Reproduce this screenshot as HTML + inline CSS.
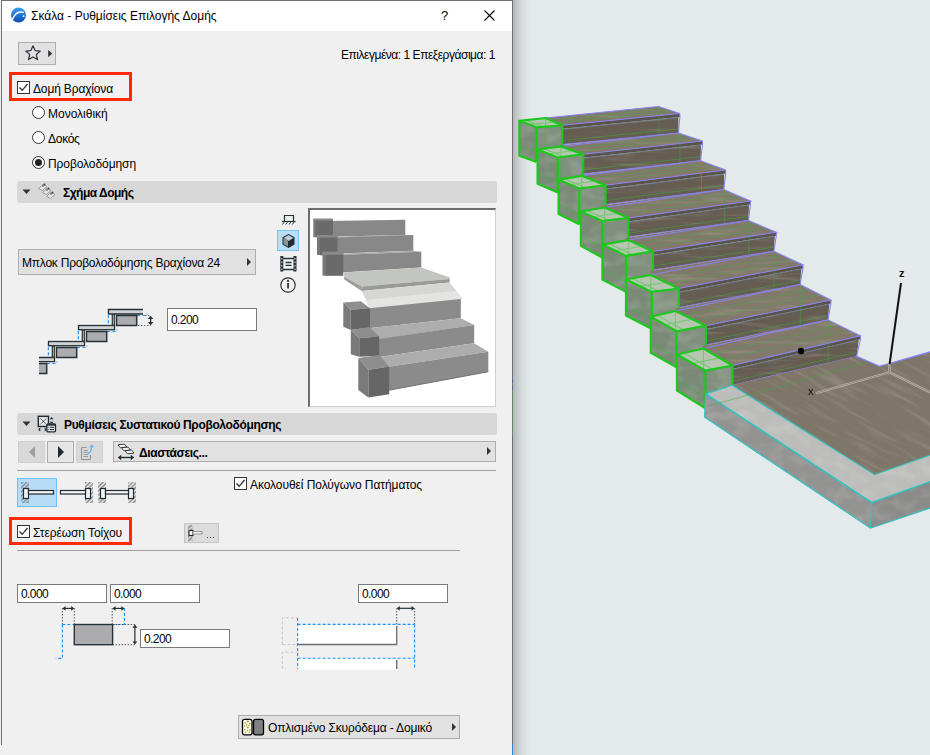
<!DOCTYPE html>
<html><head><meta charset="utf-8">
<style>
*{box-sizing:border-box;margin:0;padding:0}
html,body{width:930px;height:755px;overflow:hidden;background:#e4e9ec;font-family:"Liberation Sans",sans-serif;font-size:12px;color:#000}
.a{position:absolute}
.t{position:absolute;white-space:nowrap;line-height:14px;margin-top:1px}
#dlg{position:absolute;left:0;top:0;width:513px;height:755px;background:#f0f0f0;overflow:hidden}
.cb{position:absolute;width:13px;height:13px;border:1px solid #333;background:#fff}
.rd{position:absolute;width:13px;height:13px;border:1px solid #333;border-radius:50%;background:#fff}
.hdr{position:absolute;left:17px;width:480px;height:22px;background:#d7d7d7;border-radius:3px}
.inp{position:absolute;background:#fff;border:1px solid #7a7a7a;height:19px}
.inp span{position:absolute;left:3px;top:2px;letter-spacing:-0.6px;color:#000;line-height:14px}
.red{position:absolute;border:3px solid #ff2a00}
</style></head><body>
<div id="dlg">
  <!-- borders -->
  <div class="a" style="left:1px;top:0;width:512px;height:1px;background:#6f6f6f"></div>
  <div class="a" style="left:1px;top:0;width:1px;height:745px;background:#6f6f6f"></div>
  <div class="a" style="left:512px;top:0;width:1px;height:745px;background:#6f6f6f"></div>
  <div class="a" style="left:512px;top:745px;width:1px;height:10px;background:#2b8ad8"></div>
  <div class="a" style="left:512px;top:380px;width:1px;height:2px;background:#3a5fb0"></div>
  <div class="a" style="left:512px;top:387px;width:1px;height:3px;background:#4a6aa8"></div>
  <div class="a" style="left:512px;top:390px;width:1px;height:45px;background:#5e8a68"></div>
  <!-- title bar -->
  <div class="a" style="left:2px;top:1px;width:510px;height:30px;background:#fff"></div>
  <svg class="a" style="left:10px;top:7px" width="17" height="17" viewBox="0 0 17 17">
    <defs><linearGradient id="lg1" x1="0" y1="0" x2="0" y2="1"><stop offset="0" stop-color="#3aa0f0"/><stop offset="1" stop-color="#0b4fb0"/></linearGradient></defs>
    <circle cx="8.5" cy="8" r="7.5" fill="url(#lg1)"/>
    <path d="M2.5 12.5 Q6 3 14 5.5" stroke="#fff" stroke-width="1.4" fill="none"/>
    <circle cx="13.6" cy="9.2" r="0.9" fill="#fff"/>
  </svg>
  <div class="t" style="left:31px;top:8px">Σκάλα - Ρυθμίσεις Επιλογής Δομής</div>
  <div class="t" style="left:441px;top:8px;font-size:13px">?</div>
  <svg class="a" style="left:484px;top:10px" width="11" height="11" viewBox="0 0 11 11"><path d="M0.5 0.5L10.5 10.5M10.5 0.5L0.5 10.5" stroke="#000" stroke-width="1.1"/></svg>

  <!-- favorites button -->
  <div class="a" style="left:18px;top:42px;width:38px;height:23px;background:#e1e1e1;border:1px solid #adadad"></div>
  <svg class="a" style="left:24px;top:44px" width="30" height="19" viewBox="0 0 30 19">
    <path d="M9 1.8L11.1 6.6L16.2 7.1L12.3 10.5L13.5 15.6L9 12.9L4.5 15.6L5.7 10.5L1.8 7.1L6.9 6.6Z" fill="none" stroke="#2a3540" stroke-width="1.2" stroke-linejoin="round"/>
    <path d="M24.2 6L28.2 9.6L24.2 13.2Z" fill="#333"/>
  </svg>
  <div class="t" style="left:341px;top:47px;letter-spacing:-0.47px">Επιλεγμένα: 1 Επεξεργάσιμα: 1</div>

  <!-- red box 1 -->
  <div class="red" style="left:9px;top:72px;width:123px;height:29px"></div>
  <div class="cb" style="left:17px;top:81px"></div>
  <svg class="a" style="left:17px;top:81px" width="13" height="13" viewBox="0 0 13 13"><path d="M2.5 6.5L5.2 9.3L10.5 3" stroke="#333" stroke-width="1.3" fill="none"/></svg>
  <div class="t" style="left:33px;top:81px;letter-spacing:-0.15px">Δομή Βραχίονα</div>

  <div class="rd" style="left:32px;top:106px"></div>
  <div class="t" style="left:48px;top:106px">Μονολιθική</div>
  <div class="rd" style="left:32px;top:131px"></div>
  <div class="t" style="left:48px;top:131px;letter-spacing:-0.28px">Δοκός</div>
  <div class="rd" style="left:32px;top:156px"></div>
  <div class="a" style="left:35px;top:159px;width:7px;height:7px;border-radius:50%;background:#222"></div>
  <div class="t" style="left:48px;top:156px;letter-spacing:-0.08px">Προβολοδόμηση</div>

  <!-- section 1 header -->
  <div class="hdr" style="top:181px"></div>
  <svg class="a" style="left:22px;top:188px" width="9" height="8" viewBox="0 0 9 8"><path d="M0.5 1.5H8.5L4.5 6Z" fill="#333"/></svg>
  <svg class="a" style="left:37px;top:182px" width="19" height="20" viewBox="0 0 19 20">
    <g fill="#e6e6e6" stroke="#9a9a9a" stroke-width="1">
      <path d="M1.5 6.5L6 2.5L10 4.5L5.5 8.5Z"/><path d="M5.5 10.5L10 6.5L14 8.5L9.5 12.5Z"/><path d="M9.5 14.5L14 10.5L18 12.5L13.5 16.5Z"/>
    </g>
    <g fill="#3a3f42"><circle cx="7.5" cy="2.5" r="1"/><circle cx="6" cy="4" r="0.8"/><circle cx="11.5" cy="6.5" r="1"/><circle cx="10" cy="8" r="0.8"/><circle cx="15.5" cy="10.5" r="1"/><circle cx="14" cy="12" r="0.8"/></g>
  </svg>
  <div class="t" style="left:63px;top:185px;font-weight:bold;letter-spacing:-0.5px">Σχήμα Δομής</div>

  <!-- dropdown -->
  <div class="a" style="left:18px;top:249px;width:238px;height:26px;background:#e1e1e1;border:1px solid #adadad"></div>
  <div class="t" style="left:22px;top:255px;letter-spacing:-0.23px">Μπλοκ Προβολοδόμησης Βραχίονα 24</div>
  <svg class="a" style="left:246px;top:257px" width="6" height="10" viewBox="0 0 6 10"><path d="M1 1L5 5L1 9Z" fill="#333"/></svg>

  <!-- stair diagram -->
  <svg id="stairdiag" class="a" style="left:30px;top:300px" width="130" height="80" viewBox="0 0 130 80">
    <defs>
      <g id="stp">
        <path d="M78.4 15.2V25" stroke="#1e90ff" stroke-width="1.2" stroke-dasharray="3 2" fill="none"/>
        <path d="M107 15.5H116.8V13.5" stroke="#1e90ff" stroke-width="1.2" stroke-dasharray="3 2.5" fill="none"/>
        <rect x="82.3" y="13.8" width="2" height="11.6" fill="#d2d2d2" stroke="#263238" stroke-width="1.2"/>
        <rect x="86.5" y="15.5" width="20.2" height="10" fill="#acabb0" stroke="#263238" stroke-width="1.5"/>
      </g>
    </defs>
    <use href="#stp"/>
    <use href="#stp" transform="translate(-30,16)"/>
    <use href="#stp" transform="translate(-60,32)"/>
    <use href="#stp" transform="translate(-90,48)"/>
    <path d="M78.5 9.5H113M78.5 13.8H113M78.5 9.5V13.8" stroke="#263238" stroke-width="1.2" fill="#d2d2d2"/>
    <rect x="78.5" y="9.5" width="34" height="4.3" fill="#d2d2d2"/>
    <path d="M113 9.5H78.5V13.8H113" stroke="#263238" stroke-width="1.3" fill="none"/>
    <rect x="48.5" y="25.5" width="36" height="4.2" fill="#d2d2d2" stroke="#263238" stroke-width="1.3"/>
    <rect x="18.5" y="41.5" width="36" height="4.2" fill="#d2d2d2" stroke="#263238" stroke-width="1.3"/>
    <rect x="9" y="57.5" width="15.5" height="4.2" fill="#d2d2d2"/>
    <path d="M9 57.5H24.5V61.7H9" stroke="#263238" stroke-width="1.3" fill="none"/>
    <rect x="0" y="0" width="9" height="80" fill="#f0f0f0"/>
    <path d="M115 15.5H121M108 25.5H121" stroke="#555" stroke-width="0.9" stroke-dasharray="1.5 1.5"/>
    <path d="M120.6 17V24" stroke="#263238" stroke-width="1.3"/>
    <path d="M117.8 19L120.6 15.7L123.4 19ZM117.8 22L120.6 25.3L123.4 22Z" fill="#263238"/>
  </svg>

  <div class="inp" style="left:167px;top:308px;width:90px;height:23px"><span style="top:4px">0.200</span></div>

  <!-- view icons -->
  <svg class="a" style="left:276px;top:210px" width="24" height="84" viewBox="0 0 24 84">
    <path d="M8.5 11.5V5.5H17.5V11.5" stroke="#263238" stroke-width="1.2" fill="none"/>
    <path d="M6 11.5H19.5" stroke="#263238" stroke-width="1.2"/>
    <path d="M6.5 14.5L8 12.2M9.8 14.5L11.3 12.2M13.1 14.5L14.6 12.2M16.4 14.5L17.9 12.2" stroke="#263238" stroke-width="1"/>
    <rect x="1.5" y="20.5" width="21" height="20" fill="#b9def6" stroke="#76c5f5"/>
    <path d="M12.5 24L18.5 27.3V34.5L12.5 38L6.5 34.5V27.3Z" fill="#1f2c33"/>
    <path d="M7.5 28L12.5 25L17.5 28L12.5 31Z" fill="#b8cdd8"/>
    <path d="M7.5 28.3L12 31V36.6L7.5 34Z" fill="#8a979e"/>
    <rect x="4.3" y="46" width="3" height="15.5" fill="#263238"/>
    <rect x="17.5" y="46" width="3" height="15.5" fill="#263238"/>
    <path d="M5.8 48V49.5M5.8 51.5V53M5.8 55V56.5M5.8 58.5V60M19 48V49.5M19 51.5V53M19 55V56.5M19 58.5V60" stroke="#e8e8e8" stroke-width="1"/>
    <path d="M7 48.5H18M7 59.5H18M9.5 52.5H15.5M9.5 55.3H15.5" stroke="#263238" stroke-width="1.3"/>
    <circle cx="12" cy="75" r="7.2" fill="none" stroke="#263238" stroke-width="1.2"/>
    <rect x="11.2" y="73" width="1.7" height="5.5" fill="#263238"/>
    <circle cx="12" cy="70.8" r="1.1" fill="#263238"/>
  </svg>
  <!-- preview -->
  <div class="a" style="left:308px;top:208px;width:188px;height:199px;background:#fff;border:1px solid #cfcfcf;border-top:2px solid #6d6d6d;border-left:2px solid #6d6d6d"></div>
  <svg id="preview" class="a" style="left:310px;top:210px" width="185" height="196" viewBox="310 210 185 196">
    <!-- upper flight -->
    <polygon points="328,220.9 405.3,219.7 405.3,235 328,236.8" fill="#888"/>
    <polygon points="333,236.7 405.3,235 413.3,235.5 337.5,237.5" fill="#aaa"/>
    <polygon points="333,237.6 413.3,235 413.3,250.8 333,253.8" fill="#888"/>
    <polygon points="337.5,253.7 413.3,250.8 421.3,251.7 343.3,254.7" fill="#aaa"/>
    <polygon points="338,254.9 421.3,251.7 421.3,267.5 338,272.8" fill="#888"/>
    <!-- landing -->
    <polygon points="344.2,272.5 421.3,267.5 450,277.5 449.7,279 361.7,286.5 344.2,276.7" fill="#c3c5c1"/>
    <polygon points="344.2,276.7 361.7,286.5 361.7,291 344.2,279.5" fill="#9c9d9a"/>
    <polygon points="361.7,286.5 449.7,279 449.7,282.5 361.7,291" fill="#999a97"/>
    <polygon points="361.7,291 449.7,282.5 462.5,299 370.8,310" fill="#d6d7d4"/>
    <polygon points="365,300 455,291 462.5,299 370.8,310" fill="#e4e5e2"/>
    <!-- lower flight -->
    <polygon points="362,309 460.8,299 460.8,318.3 362,329" fill="#8b8b8b"/>
    <polygon points="362,329 460.8,318.3 474.2,325 375,340" fill="#adadad"/>
    <polygon points="372,340 474.2,325 474.2,343.3 372,358" fill="#8b8b8b"/>
    <polygon points="372,358 474.2,343.3 488.3,351.7 384,367.5" fill="#adadad"/>
    <polygon points="384,367.5 488.3,351.7 488.3,371.7 384,391" fill="#8b8b8b"/>
    <path d="M389 390.2L488.3 371.7" stroke="#707070" stroke-width="1"/>
    <!-- blocks upper -->
    <g>
      <rect x="313.3" y="219.2" width="5" height="18" fill="#777"/><rect x="316" y="219.2" width="17" height="18" fill="#6a6a6a"/>
      <rect x="313.3" y="218.5" width="19.7" height="2" fill="#8a8a8a"/>
      <rect x="317" y="235" width="5" height="20" fill="#777"/><rect x="320" y="236" width="17.5" height="19.3" fill="#6a6a6a"/>
      <rect x="317" y="235" width="20.5" height="2.5" fill="#8a8a8a"/>
      <rect x="322.5" y="251.7" width="5" height="24" fill="#777"/><rect x="326" y="253" width="17.3" height="22.8" fill="#6a6a6a"/>
      <rect x="322.5" y="251.7" width="20.8" height="3" fill="#8a8a8a"/>
    </g>
    <!-- blocks lower -->
    <g>
      <polygon points="343.3,302.5 360.8,301.3 370,308.3 350.8,309.7" fill="#8e8e8e"/>
      <polygon points="350.8,309.7 370,308.3 370,327.5 350.8,330" fill="#666"/>
      <polygon points="343.3,302.5 350.8,309.7 350.8,330 343.3,326.7" fill="#7a7a7a"/>
      <polygon points="350.8,330 369.2,327 379.2,336.3 359.2,338.3" fill="#8e8e8e"/>
      <polygon points="359.2,338.3 379.2,336.3 379.2,355.8 359.2,356.7" fill="#666"/>
      <polygon points="350.8,330 359.2,338.3 359.2,356.7 350.8,354.2" fill="#7a7a7a"/>
      <polygon points="358.3,358 379.2,355 389.2,366.7 368.3,369.7" fill="#8e8e8e"/>
      <polygon points="368.3,369.7 389.2,366.7 389.2,394.2 368.3,397.5" fill="#666"/>
      <polygon points="358.3,358 368.3,369.7 368.3,397.5 358.3,390" fill="#7a7a7a"/>
    </g>
  </svg>

  <!-- section 2 header -->
  <div class="hdr" style="top:413px"></div>
  <svg class="a" style="left:22px;top:420px" width="9" height="8" viewBox="0 0 9 8"><path d="M0.5 1.5H8.5L4.5 6Z" fill="#333"/></svg>
  <svg id="icsys" class="a" style="left:37px;top:415px" width="20" height="18" viewBox="0 0 20 18">
    <rect x="1.3" y="1.3" width="10.2" height="10.2" fill="#e4e4e4" stroke="#1f2b33" stroke-width="1.4"/>
    <path d="M3.5 3.5L9.3 9.3M9.3 3.5L3.5 9.3" stroke="#1f2b33" stroke-width="1" stroke-dasharray="1.3 0.5"/>
    <path d="M12.8 4.3L14.6 2L16.4 4.3ZM12.8 6.7L14.6 9L16.4 6.7Z" fill="#1f2b33"/>
    <path d="M3.3 12.4L1.2 14.4L3.3 16.4ZM7.7 12.4L9.8 14.4L7.7 16.4Z" fill="#1f2b33"/>
    <rect x="9.9" y="8.8" width="8.6" height="8" rx="1" fill="#e8e8e8" stroke="#1f2b33" stroke-width="1.3"/>
    <path d="M9.9 9.9H18.5" stroke="#1f2b33" stroke-width="1.6"/>
    <path d="M13 12.3H17M13 14.5H17" stroke="#1f2b33" stroke-width="1"/>
    <circle cx="11.8" cy="12.3" r="0.55" fill="#1f2b33"/><circle cx="11.8" cy="14.5" r="0.55" fill="#1f2b33"/>
  </svg>
  <div class="t" style="left:64px;top:417px;font-weight:bold;letter-spacing:-0.35px">Ρυθμίσεις Συστατικού Προβολοδόμησης</div>

  <!-- nav buttons -->
  <div class="a" style="left:18px;top:441px;width:27px;height:22px;background:#d9d9d9;border:1px solid #cfcfcf"></div>
  <svg class="a" style="left:18px;top:441px" width="27" height="22"><path d="M11 11L17 5V17Z" fill="#9aa0a4"/></svg>
  <div class="a" style="left:47px;top:441px;width:27px;height:22px;background:#e6e6e6;border:1px solid #adadad"></div>
  <svg class="a" style="left:47px;top:441px" width="27" height="22"><path d="M11 5L17 11L11 17Z" fill="#1f2b33"/></svg>
  <div class="a" style="left:76px;top:441px;width:27px;height:22px;background:#d9d9d9;border:1px solid #cfcfcf"></div>
  <svg id="icdoc" class="a" style="left:76px;top:441px" width="27" height="22">
    <path d="M10.5 6.5H6.5Q5.5 6.5 5.5 7.5V17.5Q5.5 18.5 6.5 18.5H13.5Q14.5 18.5 14.5 17.5V14" stroke="#8d959a" stroke-width="1.1" fill="none"/>
    <path d="M7.5 9.5H12M7.5 11.5H12M7.5 13.5H12M7.5 15.5H12" stroke="#8d959a" stroke-width="0.9"/>
    <path d="M11.5 12.5Q15 12.5 15.5 6" stroke="#76b9f0" stroke-width="1.8" fill="none"/>
    <path d="M12.8 6.2L15.6 3.2L18.4 6.2Z" fill="#76b9f0"/>
  </svg>
  <!-- dimension dropdown -->
  <div class="a" style="left:113px;top:441px;width:383px;height:21px;background:#e1e1e1;border:1px solid #adadad"></div>
  <svg id="icdim" class="a" style="left:116px;top:443px" width="20" height="18">
    <g fill="#f2f2f2" stroke="#1f2b33" stroke-width="0.9" stroke-linejoin="round"><path d="M2.5 1.5l5.8 -0.3l2 1.8v1.3l-5.8 0.4l-2 -1.8z" /><path d="M6.1 4.5l5.8 -0.3l2 1.8v1.3l-5.8 0.4l-2 -1.8z" /><path d="M9.7 7.5l5.8 -0.3l2 1.8v1.3l-5.8 0.4l-2 -1.8z" /></g>
    <path d="M4 14.5H16" stroke="#1f2b33" stroke-width="1.4"/>
    <path d="M1.8 14.5L5.2 11.8V17.2ZM18.2 14.5L14.8 11.8V17.2Z" fill="#1f2b33"/>
  </svg>
  <div class="t" style="left:139px;top:445px;font-weight:bold;letter-spacing:-0.39px">Διαστάσεις...</div>
  <svg class="a" style="left:486px;top:446px" width="6" height="10" viewBox="0 0 6 10"><path d="M1 1L5 5L1 9Z" fill="#333"/></svg>
  <div class="a" style="left:17px;top:470px;width:479px;height:1px;background:#a0a0a0"></div>

  <!-- anchor icons -->
  <div class="a" style="left:17px;top:478px;width:40px;height:29px;background:#b7dcf5;border:1px solid #6cc2f7"></div>
  <svg id="icanch" class="a" style="left:17px;top:478px" width="122" height="29">
    <defs><pattern id="hatch" width="3" height="3" patternUnits="userSpaceOnUse" patternTransform="rotate(45)"><rect width="1.5" height="3" fill="#8a8a8a"/></pattern></defs>
    <rect x="4" y="4" width="8" height="21" fill="url(#hatch)"/>
    <rect x="6.5" y="10.5" width="5" height="10" fill="#f4f4f4" stroke="#1f2b33" stroke-width="1.2"/>
    <rect x="11.5" y="12.5" width="25" height="3.5" fill="#f4f4f4" stroke="#1f2b33" stroke-width="1.2"/>
    <rect x="68" y="4" width="8" height="21" fill="url(#hatch)"/>
    <rect x="68.5" y="10.5" width="5" height="10" fill="#f4f4f4" stroke="#1f2b33" stroke-width="1.2"/>
    <rect x="43.5" y="12.5" width="25" height="3.5" fill="#f4f4f4" stroke="#1f2b33" stroke-width="1.2"/>
    <rect x="81" y="4" width="8" height="21" fill="url(#hatch)"/>
    <rect x="111" y="4" width="8" height="21" fill="url(#hatch)"/>
    <rect x="83.5" y="10.5" width="5" height="10" fill="#f4f4f4" stroke="#1f2b33" stroke-width="1.2"/>
    <rect x="111.5" y="10.5" width="5" height="10" fill="#f4f4f4" stroke="#1f2b33" stroke-width="1.2"/>
    <rect x="88.5" y="12.5" width="23" height="3.5" fill="#f4f4f4" stroke="#1f2b33" stroke-width="1.2"/>
  </svg>

  <div class="cb" style="left:234px;top:477px"></div>
  <svg class="a" style="left:234px;top:477px" width="13" height="13" viewBox="0 0 13 13"><path d="M2.5 6.5L5.2 9.3L10.5 3" stroke="#333" stroke-width="1.3" fill="none"/></svg>
  <div class="t" style="left:250px;top:477px;letter-spacing:-0.07px">Ακολουθεί Πολύγωνο Πατήματος</div>

  <!-- red box 2 -->
  <div class="red" style="left:9px;top:517px;width:123px;height:28px"></div>
  <div class="cb" style="left:17px;top:525px"></div>
  <svg class="a" style="left:17px;top:525px" width="13" height="13" viewBox="0 0 13 13"><path d="M2.5 6.5L5.2 9.3L10.5 3" stroke="#333" stroke-width="1.3" fill="none"/></svg>
  <div class="t" style="left:33px;top:525px;letter-spacing:-0.08px">Στερέωση Τοίχου</div>

  <div class="a" style="left:184px;top:523px;width:35px;height:20px;background:#dcdcdc;border:1px solid #c4c4c4"></div>
  <svg id="icsmall" class="a" style="left:184px;top:523px" width="35" height="20">
    <rect x="4" y="2" width="4.5" height="16" fill="url(#hatch)"/>
    <rect x="5" y="7.5" width="4" height="5" fill="#fafafa" stroke="#1f2b33" stroke-width="1.1"/>
    <rect x="9" y="8.5" width="9" height="2.5" fill="#f0f0f0" stroke="#8a9296" stroke-width="0.9"/>
    <circle cx="23.5" cy="14.5" r="0.6" fill="#333"/><circle cx="26.5" cy="14.5" r="0.6" fill="#333"/><circle cx="29.5" cy="14.5" r="0.6" fill="#333"/>
  </svg>
  <div class="a" style="left:17px;top:550px;width:443px;height:1px;background:#a0a0a0"></div>

  <!-- bottom inputs -->
  <div class="inp" style="left:17px;top:584px;width:90px"><span>0.000</span></div>
  <div class="inp" style="left:110px;top:584px;width:90px"><span>0.000</span></div>
  <div class="inp" style="left:140px;top:629px;width:90px"><span>0.200</span></div>
  <div class="inp" style="left:358px;top:584px;width:90px"><span>0.000</span></div>
  <svg id="diag2" class="a" style="left:40px;top:600px" width="110" height="65">
    <path d="M22.4 8V24.5M34.3 8V24.5M72.2 8V24.5" stroke="#444" stroke-width="0.9" stroke-dasharray="1.5 1.5"/>
    <path d="M84.5 8V24.5" stroke="#1e90ff" stroke-width="1.1" stroke-dasharray="3 2"/>
    <path d="M22.4 24.5H84.5" stroke="#1e90ff" stroke-width="1.1" stroke-dasharray="3 2"/>
    <path d="M22.4 24.5V58.4H15.8" stroke="#1e90ff" stroke-width="1.1" stroke-dasharray="3 2" fill="none"/>
    <path d="M72.6 24.5H95M72.6 44.7H95" stroke="#444" stroke-width="0.9" stroke-dasharray="1.5 1.5"/>
    <rect x="34.3" y="24.5" width="38.3" height="20.2" fill="#acabb0" stroke="#263238" stroke-width="1.4"/>
    <path d="M25 8.4H32" stroke="#263238" stroke-width="1.2"/><path d="M22.4 8.4L25.5 6V10.8ZM34.3 8.4L31.2 6V10.8Z" fill="#263238"/>
    <path d="M75 8.4H82" stroke="#263238" stroke-width="1.2"/><path d="M72.4 8.4L75.5 6V10.8ZM84.5 8.4L81.4 6V10.8Z" fill="#263238"/>
    <path d="M94.9 27V42" stroke="#263238" stroke-width="1.2"/><path d="M94.9 24.6L92.5 27.8H97.3ZM94.9 44.6L92.5 41.4H97.3Z" fill="#263238"/>
  </svg>
  <svg id="diag3" class="a" style="left:275px;top:600px" width="150" height="70">
    <rect x="22.6" y="24.4" width="99.1" height="20.1" fill="#fff"/>
    <rect x="22.6" y="58.3" width="99.1" height="12" fill="#fff"/>
    <path d="M22.6 44.5H121.7V26" stroke="#6b6b6b" stroke-width="1.3" fill="none"/>
    <path d="M121.7 69V60" stroke="#6b6b6b" stroke-width="1.3" fill="none"/>
    <path d="M7.3 44.5V17.9H22.6M7.3 44.5H22.6M7.3 69V52.2H22.6" stroke="#c4c4c4" stroke-width="1" stroke-dasharray="3 2" fill="none"/>
    <path d="M121.7 8V24.4" stroke="#444" stroke-width="0.9" stroke-dasharray="1.5 1.5"/>
    <path d="M139.6 8V24.4" stroke="#444" stroke-width="0.9" stroke-dasharray="1.5 1.5"/>
    <path d="M22.6 17.9V69M139.6 24.4V69M22.6 24.4H139.6M22.6 58.3H139.6" stroke="#1e90ff" stroke-width="1.1" stroke-dasharray="3 2" fill="none"/>
    <path d="M124.3 8.3H137" stroke="#263238" stroke-width="1.2"/><path d="M121.7 8.3L124.8 5.9V10.7ZM139.6 8.3L136.5 5.9V10.7Z" fill="#263238"/>
  </svg>

  <!-- material button -->
  <div class="a" style="left:238px;top:715px;width:222px;height:24px;background:#e1e1e1;border:1px solid #adadad"></div>
  <svg id="icmat" class="a" style="left:241px;top:718px" width="24" height="18">
    <rect x="1.5" y="1.3" width="9.5" height="15.5" rx="2" fill="#fffef0" stroke="#000" stroke-width="1.3"/>
    <g fill="#9c9410"><path d="M5 2.8H8.5L6.8 4.6Z"/><path d="M5 8.8H8.5L6.8 10.6Z"/><circle cx="4" cy="5" r="0.8"/><circle cx="8.8" cy="5.5" r="0.8"/><circle cx="3.6" cy="8" r="0.8"/><circle cx="5.6" cy="7" r="0.8"/><circle cx="8" cy="7.5" r="0.7"/><circle cx="3.8" cy="11.5" r="0.8"/><circle cx="9" cy="12" r="0.8"/><circle cx="4.6" cy="14.2" r="0.8"/><circle cx="8.3" cy="14.3" r="0.8"/><circle cx="6.5" cy="12.5" r="0.7"/></g>
    <rect x="12.5" y="1.3" width="10" height="15.5" rx="2" fill="#7f7f7f" stroke="#000" stroke-width="1.3"/>
  </svg>
  <div class="t" style="left:268px;top:720px;letter-spacing:-0.15px">Οπλισμένο Σκυρόδεμα - Δομικό</div>
  <svg class="a" style="left:451px;top:722px" width="6" height="10" viewBox="0 0 6 10"><path d="M1 1L5 5L1 9Z" fill="#333"/></svg>
</div>
<!-- shadow -->
<svg id="scene" class="a" style="left:513px;top:0" width="417" height="755" viewBox="513 0 417 755">
<defs>
<linearGradient id="shd" x1="0" x2="1"><stop offset="0" stop-color="#b4b8ba"/><stop offset="0.5" stop-color="#d6dbde"/><stop offset="1" stop-color="#e4e9ec"/></linearGradient>
<filter id="wood" x="0" y="0" width="100%" height="100%" color-interpolation-filters="sRGB">
  <feTurbulence type="fractalNoise" baseFrequency="0.02 0.22" numOctaves="2" seed="7" result="n"/>
  <feColorMatrix in="n" type="matrix" values="0 0 0 0 0.80  0 0 0 0 0.77  0 0 0 0 0.72  0.7 0 0 0 -0.36" result="hl"/>
  <feComposite in="hl" in2="SourceGraphic" operator="in" result="hl2"/>
  <feMerge><feMergeNode in="SourceGraphic"/><feMergeNode in="hl2"/></feMerge>
</filter>
<filter id="conc" x="0" y="0" width="100%" height="100%" color-interpolation-filters="sRGB">
  <feTurbulence type="fractalNoise" baseFrequency="0.06 0.09" numOctaves="2" seed="11" result="n"/>
  <feColorMatrix in="n" type="matrix" values="0 0 0 0 1  0 0 0 0 1  0 0 0 0 1  0.35 0 0 0 -0.15" result="hl"/>
  <feComposite in="hl" in2="SourceGraphic" operator="in" result="hl2"/>
  <feMerge><feMergeNode in="SourceGraphic"/><feMergeNode in="hl2"/></feMerge>
</filter>
</defs>
<rect x="513" y="0" width="417" height="755" fill="#e4e9ec"/>
<rect x="513" y="0" width="18" height="755" fill="url(#shd)"/>
<polygon points="545.5,118.0 658.5,106.5 679.9,113.5 562.3,125.3" fill="#82796b" filter="url(#wood)"/>
<polygon points="562.3,128.8 678.4,117.0 678.4,133.0 562.3,144.6" fill="#655c52" filter="url(#wood)"/>
<polygon points="562.3,125.3 679.9,113.5 679.9,117.0 562.3,128.8" fill="#5b5349"/>
<path d="M545.5 118.0L658.5 106.5L679.9 113.5L562.3 125.3" stroke="#8683f2" stroke-width="1.05" fill="none"/>
<path d="M562.3 129.3L678.4 117.5" stroke="#7ab0d8" stroke-width="0.8" opacity="0.55" fill="none"/>
<path d="M679.9 113.5V117.0L678.4 133.0L562.3 144.6" stroke="#8683f2" stroke-width="1.05" fill="none"/>
<path d="M553.7 120.1L663.6 108.8" stroke="#3cb03c" stroke-width="0.9" opacity="0.5" fill="none"/>
<path d="M557.9 122.7L670.6 111.1" stroke="#3cb03c" stroke-width="0.9" opacity="0.5" fill="none"/>
<path d="M562.3 140.6L677.4 129.0" stroke="#3cb03c" stroke-width="1" opacity="0.5" fill="none"/>
<path d="M658.9 106.5V135.0" stroke="#3cb03c" stroke-width="1" opacity="0.5" fill="none"/>
<polygon points="536.5,127.3 562.3,125.3 562.3,160.0 536.5,162.0" fill="#81907e" filter="url(#conc)"/>
<polygon points="519.3,120.8 536.5,127.3 536.5,162.0 519.3,155.6" fill="#7a8a77" filter="url(#conc)"/>
<polygon points="519.3,120.8 545.5,118.0 562.3,125.3 536.5,127.3" fill="#b6c6b1"/>
<path d="M536.5 127.3L536.5 162.0M519.3 120.8L519.3 155.6L536.5 162.0M562.3 125.3L562.3 160.0" stroke="#1cc81c" stroke-width="2.2" fill="none" stroke-linejoin="round"/>
<path d="M545.5 118.0V151.0M528.8 124.4L554.7 122.0M525.8 120.1L543.0 126.8M519.3 145.9L536.5 152.3L562.3 148.2" stroke="#1cc81c" stroke-width="1.1" opacity="0.4" fill="none"/>
<polygon points="519.3,120.8 545.5,118.0 562.3,125.3 536.5,127.3" stroke="#1cc81c" stroke-width="2.2" fill="none" stroke-linejoin="round"/>
<polygon points="559.3,145.6 678.4,133.0 702.5,141.0 583.2,154.3 559.3,154.3" fill="#82796b" filter="url(#wood)"/>
<polygon points="583.2,157.8 701.0,144.5 700.6,160.8 583.2,173.9" fill="#655c52" filter="url(#wood)"/>
<polygon points="583.2,154.3 702.5,141.0 702.5,144.5 583.2,157.8" fill="#5b5349"/>
<path d="M561.0 146.4L678.4 133.0L702.5 141.0L583.2 154.3" stroke="#8683f2" stroke-width="1.05" fill="none"/>
<path d="M583.2 158.3L701.0 145.0" stroke="#7ab0d8" stroke-width="0.8" opacity="0.55" fill="none"/>
<path d="M702.5 141.0V144.5L700.6 160.8L583.2 173.9" stroke="#8683f2" stroke-width="1.05" fill="none"/>
<path d="M571.0 148.7L684.4 135.6" stroke="#3cb03c" stroke-width="0.9" opacity="0.5" fill="none"/>
<path d="M577.0 151.5L692.3 138.3" stroke="#3cb03c" stroke-width="0.9" opacity="0.5" fill="none"/>
<path d="M583.2 169.9L699.6 156.8" stroke="#3cb03c" stroke-width="1" opacity="0.5" fill="none"/>
<path d="M679.9 132.8V163.1" stroke="#3cb03c" stroke-width="1" opacity="0.5" fill="none"/>
<polygon points="557.8,157.5 583.2,154.3 583.2,189.2 557.8,192.4" fill="#81907e" filter="url(#conc)"/>
<polygon points="537.6,149.5 557.8,157.5 557.8,192.4 537.6,183.7" fill="#7a8a77" filter="url(#conc)"/>
<polygon points="537.6,149.5 561.0,146.4 583.2,154.3 557.8,157.5" fill="#b6c6b1"/>
<path d="M557.8 157.5L557.8 192.4M537.6 149.5L537.6 183.7L557.8 192.4M583.2 154.3L583.2 189.2" stroke="#1cc81c" stroke-width="2.2" fill="none" stroke-linejoin="round"/>
<path d="M561.0 146.4V179.6M548.7 153.9L573.2 150.7M543.5 148.7L564.1 156.7M537.6 174.1L557.8 182.6L583.2 177.3" stroke="#1cc81c" stroke-width="1.1" opacity="0.4" fill="none"/>
<polygon points="537.6,149.5 561.0,146.4 583.2,154.3 557.8,157.5" stroke="#1cc81c" stroke-width="2.2" fill="none" stroke-linejoin="round"/>
<polygon points="580.2,174.9 700.6,160.8 725.7,170.1 605.5,185.3 580.2,185.3" fill="#82796b" filter="url(#wood)"/>
<polygon points="605.5,188.8 724.2,173.6 723.8,189.6 605.5,204.6" fill="#655c52" filter="url(#wood)"/>
<polygon points="605.5,185.3 725.7,170.1 725.7,173.6 605.5,188.8" fill="#5b5349"/>
<path d="M581.7 175.8L700.6 160.8L725.7 170.1L605.5 185.3" stroke="#8683f2" stroke-width="1.05" fill="none"/>
<path d="M605.5 189.3L724.2 174.1" stroke="#7ab0d8" stroke-width="0.8" opacity="0.55" fill="none"/>
<path d="M725.7 170.1V173.6L723.8 189.6L605.5 204.6" stroke="#8683f2" stroke-width="1.05" fill="none"/>
<path d="M592.2 178.6L706.9 163.9" stroke="#3cb03c" stroke-width="0.9" opacity="0.5" fill="none"/>
<path d="M598.8 181.9L715.2 166.9" stroke="#3cb03c" stroke-width="0.9" opacity="0.5" fill="none"/>
<path d="M605.5 200.6L722.8 185.6" stroke="#3cb03c" stroke-width="1" opacity="0.5" fill="none"/>
<path d="M701.5 160.7V192.4" stroke="#3cb03c" stroke-width="1" opacity="0.5" fill="none"/>
<polygon points="579.3,188.5 605.5,185.3 605.5,221.0 579.3,224.2" fill="#81907e" filter="url(#conc)"/>
<polygon points="558.6,179.7 579.3,188.5 579.3,224.2 558.6,213.9" fill="#7a8a77" filter="url(#conc)"/>
<polygon points="558.6,179.7 581.7,175.8 605.5,185.3 579.3,188.5" fill="#b6c6b1"/>
<path d="M579.3 188.5L579.3 224.2M558.6 179.7L558.6 213.9L579.3 224.2M605.5 185.3L605.5 221.0" stroke="#1cc81c" stroke-width="2.2" fill="none" stroke-linejoin="round"/>
<path d="M581.7 175.8V209.7M570.0 184.5L594.8 181.0M564.4 178.7L585.8 187.7M558.6 204.3L579.3 214.2L605.5 208.9" stroke="#1cc81c" stroke-width="1.1" opacity="0.4" fill="none"/>
<polygon points="558.6,179.7 581.7,175.8 605.5,185.3 579.3,188.5" stroke="#1cc81c" stroke-width="2.2" fill="none" stroke-linejoin="round"/>
<polygon points="602.5,205.6 723.8,189.6 750.5,201.0 628.5,217.9 602.5,217.9" fill="#82796b" filter="url(#wood)"/>
<polygon points="628.5,221.4 749.0,204.5 748.4,220.5 628.5,237.1" fill="#655c52" filter="url(#wood)"/>
<polygon points="628.5,217.9 750.5,201.0 750.5,204.5 628.5,221.4" fill="#5b5349"/>
<path d="M604.7 207.5L723.8 189.6L750.5 201.0L628.5 217.9" stroke="#8683f2" stroke-width="1.05" fill="none"/>
<path d="M628.5 221.9L749.0 205.0" stroke="#7ab0d8" stroke-width="0.8" opacity="0.55" fill="none"/>
<path d="M750.5 201.0V204.5L748.4 220.5L628.5 237.1" stroke="#8683f2" stroke-width="1.05" fill="none"/>
<path d="M615.2 210.5L730.6 193.4" stroke="#3cb03c" stroke-width="0.9" opacity="0.5" fill="none"/>
<path d="M621.8 214.2L739.4 197.1" stroke="#3cb03c" stroke-width="0.9" opacity="0.5" fill="none"/>
<path d="M628.5 233.1L747.4 216.5" stroke="#3cb03c" stroke-width="1" opacity="0.5" fill="none"/>
<path d="M724.7 189.5V223.8" stroke="#3cb03c" stroke-width="1" opacity="0.5" fill="none"/>
<polygon points="602.3,221.0 628.5,217.9 628.5,254.5 602.3,257.6" fill="#81907e" filter="url(#conc)"/>
<polygon points="580.9,211.5 602.3,221.0 602.3,257.6 580.9,245.7" fill="#7a8a77" filter="url(#conc)"/>
<polygon points="580.9,211.5 604.7,207.5 628.5,217.9 602.3,221.0" fill="#b6c6b1"/>
<path d="M602.3 221.0L602.3 257.6M580.9 211.5L580.9 245.7L602.3 257.6M628.5 217.9L628.5 254.5" stroke="#1cc81c" stroke-width="2.2" fill="none" stroke-linejoin="round"/>
<path d="M604.7 207.5V242.3M592.7 216.7L617.8 213.2M586.8 210.5L608.8 220.2M580.9 236.1L602.3 247.4L628.5 242.1" stroke="#1cc81c" stroke-width="1.1" opacity="0.4" fill="none"/>
<polygon points="580.9,211.5 604.7,207.5 628.5,217.9 602.3,221.0" stroke="#1cc81c" stroke-width="2.2" fill="none" stroke-linejoin="round"/>
<polygon points="625.5,238.1 748.4,220.5 776.3,232.2 653.0,251.4 625.5,251.4" fill="#82796b" filter="url(#wood)"/>
<polygon points="653.0,254.9 774.8,235.7 773.9,251.3 653.0,270.1" fill="#655c52" filter="url(#wood)"/>
<polygon points="653.0,251.4 776.3,232.2 776.3,235.7 653.0,254.9" fill="#5b5349"/>
<path d="M628.3 240.1L748.4 220.5L776.3 232.2L653.0 251.4" stroke="#8683f2" stroke-width="1.05" fill="none"/>
<path d="M653.0 255.4L774.8 236.2" stroke="#7ab0d8" stroke-width="0.8" opacity="0.55" fill="none"/>
<path d="M776.3 232.2V235.7L773.9 251.3L653.0 270.1" stroke="#8683f2" stroke-width="1.05" fill="none"/>
<path d="M639.1 243.4L755.6 224.4" stroke="#3cb03c" stroke-width="0.9" opacity="0.5" fill="none"/>
<path d="M646.0 247.3L764.8 228.2" stroke="#3cb03c" stroke-width="0.9" opacity="0.5" fill="none"/>
<path d="M653.0 266.1L772.9 247.3" stroke="#3cb03c" stroke-width="1" opacity="0.5" fill="none"/>
<path d="M748.9 220.4V255.2" stroke="#3cb03c" stroke-width="1" opacity="0.5" fill="none"/>
<polygon points="626.0,255.9 653.0,251.4 653.0,287.4 626.0,291.9" fill="#81907e" filter="url(#conc)"/>
<polygon points="602.4,244.6 626.0,255.9 626.0,291.9 602.4,279.5" fill="#7a8a77" filter="url(#conc)"/>
<polygon points="602.4,244.6 628.3,240.1 653.0,251.4 626.0,255.9" fill="#b6c6b1"/>
<path d="M626.0 255.9L626.0 291.9M602.4 244.6L602.4 279.5L626.0 291.9M653.0 251.4L653.0 287.4" stroke="#1cc81c" stroke-width="2.2" fill="none" stroke-linejoin="round"/>
<path d="M628.3 240.1V274.3M615.4 250.8L641.9 246.3M608.9 243.5L632.8 254.8M602.4 269.7L626.0 281.8L653.0 275.2" stroke="#1cc81c" stroke-width="1.1" opacity="0.4" fill="none"/>
<polygon points="602.4,244.6 628.3,240.1 653.0,251.4 626.0,255.9" stroke="#1cc81c" stroke-width="2.2" fill="none" stroke-linejoin="round"/>
<polygon points="650.0,271.1 773.9,251.3 803.0,264.9 678.9,288.5 650.0,288.5" fill="#82796b" filter="url(#wood)"/>
<polygon points="678.9,292.0 801.5,268.4 800.1,284.6 678.9,307.6" fill="#655c52" filter="url(#wood)"/>
<polygon points="678.9,288.5 803.0,264.9 803.0,268.4 678.9,292.0" fill="#5b5349"/>
<path d="M650.8 275.0L773.9 251.3L803.0 264.9L678.9 288.5" stroke="#8683f2" stroke-width="1.05" fill="none"/>
<path d="M678.9 292.5L801.5 268.9" stroke="#7ab0d8" stroke-width="0.8" opacity="0.55" fill="none"/>
<path d="M803.0 264.9V268.4L800.1 284.6L678.9 307.6" stroke="#8683f2" stroke-width="1.05" fill="none"/>
<path d="M662.8 278.9L781.5 255.8" stroke="#3cb03c" stroke-width="0.9" opacity="0.5" fill="none"/>
<path d="M670.7 283.6L791.1 260.3" stroke="#3cb03c" stroke-width="0.9" opacity="0.5" fill="none"/>
<path d="M678.9 303.6L799.1 280.6" stroke="#3cb03c" stroke-width="1" opacity="0.5" fill="none"/>
<path d="M774.0 251.3V289.6" stroke="#3cb03c" stroke-width="1" opacity="0.5" fill="none"/>
<polygon points="651.9,291.9 678.9,288.5 678.9,325.6 651.9,329.0" fill="#81907e" filter="url(#conc)"/>
<polygon points="626.0,279.5 651.9,291.9 651.9,329.0 626.0,315.5" fill="#7a8a77" filter="url(#conc)"/>
<polygon points="626.0,279.5 650.8,275.0 678.9,288.5 651.9,291.9" fill="#b6c6b1"/>
<path d="M651.9 291.9L651.9 329.0M626.0 279.5L626.0 315.5L651.9 329.0M678.9 288.5L678.9 325.6" stroke="#1cc81c" stroke-width="2.2" fill="none" stroke-linejoin="round"/>
<path d="M650.8 275.0V310.2M640.2 286.3L666.3 282.4M632.2 278.4L658.6 291.0M626.0 305.4L651.9 318.6L678.9 313.0" stroke="#1cc81c" stroke-width="1.1" opacity="0.4" fill="none"/>
<polygon points="626.0,279.5 650.8,275.0 678.9,288.5 651.9,291.9" stroke="#1cc81c" stroke-width="2.2" fill="none" stroke-linejoin="round"/>
<polygon points="675.9,308.6 800.1,284.6 830.9,300.0 705.9,325.7 675.9,325.7" fill="#82796b" filter="url(#wood)"/>
<polygon points="705.9,329.2 829.4,303.5 827.9,319.9 705.9,345.0" fill="#655c52" filter="url(#wood)"/>
<polygon points="705.9,325.7 830.9,300.0 830.9,303.5 705.9,329.2" fill="#5b5349"/>
<path d="M675.5 311.0L800.1 284.6L830.9 300.0L705.9 325.7" stroke="#8683f2" stroke-width="1.05" fill="none"/>
<path d="M705.9 329.7L829.4 304.0" stroke="#7ab0d8" stroke-width="0.8" opacity="0.55" fill="none"/>
<path d="M830.9 300.0V303.5L827.9 319.9L705.9 345.0" stroke="#8683f2" stroke-width="1.05" fill="none"/>
<path d="M688.2 315.3L808.3 289.7" stroke="#3cb03c" stroke-width="0.9" opacity="0.5" fill="none"/>
<path d="M696.9 320.4L818.4 294.8" stroke="#3cb03c" stroke-width="0.9" opacity="0.5" fill="none"/>
<path d="M705.9 341.0L826.9 315.9" stroke="#3cb03c" stroke-width="1" opacity="0.5" fill="none"/>
<path d="M800.3 284.6V325.6" stroke="#3cb03c" stroke-width="1" opacity="0.5" fill="none"/>
<polygon points="676.6,331.3 705.9,325.7 705.9,361.7 676.6,367.3" fill="#81907e" filter="url(#conc)"/>
<polygon points="650.8,316.7 676.6,331.3 676.6,367.3 650.8,352.7" fill="#7a8a77" filter="url(#conc)"/>
<polygon points="650.8,316.7 675.5,311.0 705.9,325.7 676.6,331.3" fill="#b6c6b1"/>
<path d="M676.6 331.3L676.6 367.3M650.8 316.7L650.8 352.7L676.6 367.3M705.9 325.7L705.9 361.7" stroke="#1cc81c" stroke-width="2.2" fill="none" stroke-linejoin="round"/>
<path d="M675.5 311.0V345.2M665.0 324.7L692.2 319.1M657.0 315.3L683.9 329.9M650.8 342.6L676.6 357.2L705.9 349.5" stroke="#1cc81c" stroke-width="1.1" opacity="0.4" fill="none"/>
<polygon points="650.8,316.7 675.5,311.0 705.9,325.7 676.6,331.3" stroke="#1cc81c" stroke-width="2.2" fill="none" stroke-linejoin="round"/>
<polygon points="702.9,346.0 827.9,319.9 860.4,335.8 732.5,365.5 702.9,365.5" fill="#82796b" filter="url(#wood)"/>
<polygon points="732.5,369.0 858.9,339.3 856.6,356.4 732.5,385.2" fill="#655c52" filter="url(#wood)"/>
<polygon points="732.5,365.5 860.4,335.8 860.4,339.3 732.5,369.0" fill="#5b5349"/>
<path d="M703.5 348.5L827.9 319.9L860.4 335.8L732.5 365.5" stroke="#8683f2" stroke-width="1.05" fill="none"/>
<path d="M732.5 369.5L858.9 339.8" stroke="#7ab0d8" stroke-width="0.8" opacity="0.55" fill="none"/>
<path d="M860.4 335.8V339.3L856.6 356.4L732.5 385.2" stroke="#8683f2" stroke-width="1.05" fill="none"/>
<path d="M715.8 353.5L836.6 325.1" stroke="#3cb03c" stroke-width="0.9" opacity="0.5" fill="none"/>
<path d="M724.0 359.4L847.4 330.4" stroke="#3cb03c" stroke-width="0.9" opacity="0.5" fill="none"/>
<path d="M732.5 381.2L855.6 352.4" stroke="#3cb03c" stroke-width="1" opacity="0.5" fill="none"/>
<path d="M828.2 319.8V363.0" stroke="#3cb03c" stroke-width="1" opacity="0.5" fill="none"/>
<polygon points="705.5,370.6 732.5,365.5 732.5,403.2 705.5,408.3" fill="#81907e" filter="url(#conc)"/>
<polygon points="677.0,354.5 705.5,370.6 705.5,408.3 677.0,390.5" fill="#7a8a77" filter="url(#conc)"/>
<polygon points="677.0,354.5 703.5,348.5 732.5,365.5 705.5,370.6" fill="#b6c6b1"/>
<path d="M705.5 370.6L705.5 408.3M677.0 354.5L677.0 390.5L705.5 408.3M732.5 365.5L732.5 403.2" stroke="#1cc81c" stroke-width="2.2" fill="none" stroke-linejoin="round"/>
<path d="M703.5 348.5V384.3M692.7 363.4L719.5 357.9M683.6 353.0L712.2 369.3M677.0 380.4L705.5 397.7L732.5 390.4" stroke="#1cc81c" stroke-width="1.1" opacity="0.4" fill="none"/>
<polygon points="677.0,354.5 703.5,348.5 732.5,365.5 705.5,370.6" stroke="#1cc81c" stroke-width="2.2" fill="none" stroke-linejoin="round"/>
<clipPath id="landclip"><polygon points="732.3,385.3 856.6,356.4 879.5,366.3 930.0,352.0 930.0,455.2 874.6,474.7"/></clipPath>
<polygon points="732.3,385.3 856.6,356.4 879.5,366.3 930.0,352.0 930.0,455.2 874.6,474.7" fill="#7e7669"/>
<g clip-path="url(#landclip)"><rect x="620" y="250" width="420" height="320" fill="#7e7669" transform="rotate(28 830 410)" filter="url(#wood)"/></g>
<polygon points="705.8,393.9 732.3,385.3 874.6,474.7 930.0,455.2 930.0,481.7 871.8,502.6" fill="#bcbcba" filter="url(#conc)"/>
<polygon points="705.8,393.9 871.8,502.6 870.5,528.2 704.5,417.1" fill="#939391" filter="url(#conc)"/>
<polygon points="871.8,502.6 930.0,481.7 930.0,508.1 870.5,528.2" fill="#8b8b89" filter="url(#conc)"/>
<path d="M705.8,393.9 871.8,502.6 930.0,481.7" stroke="#2ec4c4" stroke-width="1.2" fill="none"/>
<polyline points="705.8,393.9 871.8,502.6 930.0,481.7" stroke="#2ec4c4" stroke-width="1.2" fill="none"/>
<polyline points="704.5,417.1 870.5,528.2 930.0,508.1" stroke="#2ec4c4" stroke-width="1.2" fill="none"/>
<polyline points="732.3,385.3 874.6,474.7 930.0,455.2" stroke="#2ec4c4" stroke-width="1.2" fill="none"/>
<polyline points="871.8,502.6 870.5,528.2" stroke="#2ec4c4" stroke-width="1.2" fill="none"/>
<polyline points="705.8,393.9 704.5,417.1" stroke="#2ec4c4" stroke-width="1.2" fill="none"/>
<polyline points="705.8,393.9 732.3,385.3" stroke="#2ec4c4" stroke-width="1.2" fill="none"/>
<polyline points="856.6,356.4 879.5,366.3 930.0,352.0" stroke="#8683f2" stroke-width="1.3" fill="none"/>
<path d="M889.4 372.3L815.9 393.2M889.4 372.3L930 392.2M889.4 372.3V362" stroke="#d6d2ca" stroke-width="2.2" fill="none" opacity="0.75"/>
<path d="M889.4 372.3L815.9 393.2M889.4 372.3L930 392.2M889.4 372.3V362" stroke="#6a645c" stroke-width="0.6" fill="none"/>
<path d="M706 406.7L868 362" stroke="#3cb03c" stroke-width="1" opacity="0.5" fill="none"/>
<path d="M901 283L889.6 364" stroke="#111" stroke-width="2" fill="none"/>
<text x="899" y="277" font-family="Liberation Sans" font-size="11" font-weight="bold" fill="#111">z</text>
<text x="808" y="395" font-family="Liberation Sans" font-size="11" fill="#111">x</text>
<circle cx="801" cy="351" r="3.2" fill="#000"/>
</svg>
</body></html>
